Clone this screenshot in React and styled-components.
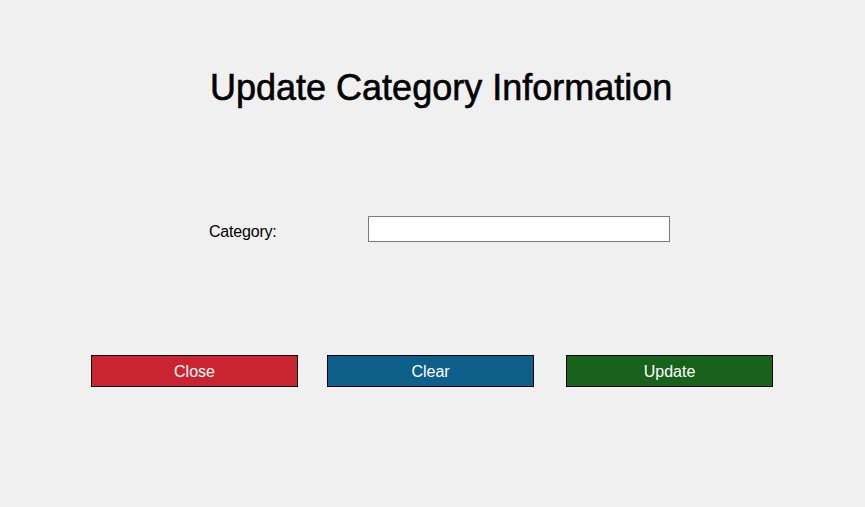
import React from "react";
import styled, { createGlobalStyle } from "styled-components";

const Global = createGlobalStyle`
  html, body { margin: 0; padding: 0; background: #f0f0f0; }
  body { font-family: "Liberation Sans", Arial, sans-serif; }
`;

const Page = styled.div`
  width: 865px;
  height: 507px;
  background: #f0f0f0;
  padding-top: 68px;
  box-sizing: border-box;
  overflow: hidden;
`;

const Title = styled.h1`
  margin: 0;
  padding-left: 210px;
  font-family: "Liberation Sans", Arial, sans-serif;
  font-size: 36px;
  font-weight: 400;
  line-height: 40px;
  color: #000;
  -webkit-text-stroke: 0.6px #000;
`;

const FieldRow = styled.div`
  display: flex;
  align-items: flex-start;
  margin-top: 108px;
  padding-left: 209px;
  height: 26px;
`;

const Label = styled.label`
  width: 159px;
  padding-top: 3px;
  font-size: 16px;
  line-height: 26px;
  color: #000;
  letter-spacing: -0.2px;
`;

const TextInput = styled.input`
  box-sizing: border-box;
  width: 302px;
  height: 26px;
  margin: 0;
  padding: 2px 4px;
  border: 1px solid #7a7a7a;
  background: #fff;
  outline: none;
  font-family: "Liberation Sans", Arial, sans-serif;
  font-size: 15px;
`;

const ButtonRow = styled.div`
  display: flex;
  margin-top: 113px;
  padding-left: 91px;
`;

const ActionButton = styled.button`
  box-sizing: border-box;
  width: 207px;
  height: 32px;
  margin: 0 0 0 ${(p) => p.$offset || 0}px;
  padding: 1px 0 0;
  border: 1px solid #000;
  background: ${(p) => p.$bg};
  color: #fff;
  font-family: "Liberation Sans", Arial, sans-serif;
  font-size: 16px;
  line-height: 29px;
  text-align: center;
  cursor: pointer;
`;

export default function App() {
  return (
    <>
      <Global />
      <Page>
        <Title>Update Category Information</Title>
        <FieldRow>
          <Label htmlFor="category">Category:</Label>
          <TextInput id="category" type="text" />
        </FieldRow>
        <ButtonRow>
          <ActionButton $bg="#c82530">Close</ActionButton>
          <ActionButton $bg="#0e5f8a" $offset={29}>Clear</ActionButton>
          <ActionButton $bg="#19621c" $offset={32}>Update</ActionButton>
        </ButtonRow>
      </Page>
    </>
  );
}
